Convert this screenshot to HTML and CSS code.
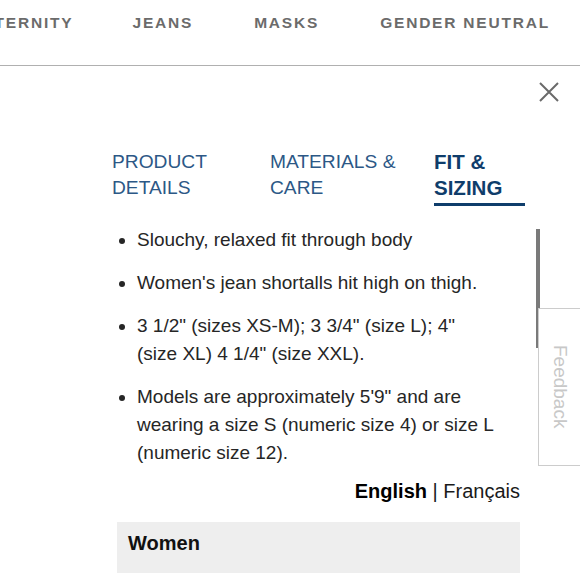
FILE: index.html
```
<!DOCTYPE html>
<html lang="en">
<head>
<meta charset="utf-8">
<title>Fit &amp; Sizing</title>
<link rel="stylesheet" href="styles.css">
</head>
<body>
<nav class="topnav">
  <a class="nav-item first">Maternity</a>
  <a class="nav-item">Jeans</a>
  <a class="nav-item">Masks</a>
  <a class="nav-item">Gender Neutral</a>
</nav>
<div class="modal">
  <div class="close-row">
    <button class="close" aria-label="Close">
      <svg width="20" height="20" viewBox="0 0 20 20"><path d="M1 1 L19 19 M19 1 L1 19" stroke="#6a6a6a" stroke-width="2" fill="none"/></svg>
    </button>
  </div>
  <div class="panel">
    <div class="tabs">
      <div class="tab tab-1">PRODUCT<br>DETAILS</div>
      <div class="tab tab-2">MATERIALS &amp;<br>CARE</div>
      <div class="tab tab-3 active">FIT &amp;<br>SIZING</div>
    </div>
    <ul class="bullets">
      <li>Slouchy, relaxed fit through body</li>
      <li>Women's jean shortalls hit high on thigh.</li>
      <li>3 1/2" (sizes XS-M); 3 3/4" (size L); 4" (size XL) 4 1/4" (size XXL).</li>
      <li>Models are approximately 5'9" and are wearing a size S (numeric size 4) or size L (numeric size 12).</li>
    </ul>
    <div class="lang"><strong>English</strong> | Français</div>
    <div class="size-head">Women</div>
  </div>
</div>
<div class="scroll-thumb"></div>
<div class="feedback"><span>Feedback</span></div>
</body>
</html>
```
FILE: styles.css
```
html, body {
  margin: 0;
  padding: 0;
  background: #fff;
  overflow: hidden;
  font-family: "Liberation Sans", Arial, sans-serif;
}
.topnav {
  display: flex;
  gap: 61px;
  height: 66px;
  box-sizing: border-box;
  padding-top: 14px;
  border-bottom: 1px solid #b0b0b0;
  overflow: hidden;
  white-space: nowrap;
}
.nav-item {
  font-size: 15.5px;
  line-height: 18px;
  font-weight: bold;
  letter-spacing: 1.8px;
  text-transform: uppercase;
  color: #6b6b6b;
}
.nav-item.first {
  margin-left: -32px;
  margin-right: -2px;
}
.close-row {
  display: flex;
  justify-content: flex-end;
  padding: 16px 21px 0 0;
}
.close {
  width: 20px;
  height: 20px;
  padding: 0;
  border: 0;
  background: none;
  display: block;
}
.close svg {
  display: block;
}
.panel {
  padding: 0 60px 0 112px;
}
.tabs {
  display: flex;
  margin-top: 47px;
  margin-right: -5px;
}
.tab {
  font-size: 19.2px;
  line-height: 26px;
  color: #2c5886;
  padding-bottom: 2px;
  border-bottom: 3px solid transparent;
}
.tab-1 { width: 158px; }
.tab-2 { width: 164px; }
.tab-3 { width: 91px; }
.tab.active {
  font-size: 20.5px;
  font-weight: bold;
  color: #0f3d6b;
  border-bottom-color: #0f3d6b;
}
.bullets {
  margin: 20px 0 0 0;
  padding: 0 0 0 25px;
  width: 360px;
  font-size: 19px;
  line-height: 28px;
  color: #262626;
}
.bullets li {
  margin-bottom: 15px;
}
.bullets li:last-child {
  margin-bottom: 0;
}
.lang {
  margin-top: 12px;
  text-align: right;
  font-size: 20px;
  line-height: 24px;
  color: #1a1a1a;
}
.lang strong {
  color: #000;
}
.size-head {
  margin: 19px 0 0 5px;
  padding: 9px 11px 18px;
  background: #eeeeee;
  font-size: 20px;
  line-height: 24px;
  font-weight: bold;
  color: #111;
}
.scroll-thumb {
  position: absolute;
  left: 536px;
  top: 229px;
  width: 4px;
  height: 119px;
  background: #7a7a7a;
}
.feedback {
  position: absolute;
  left: 538px;
  top: 308px;
  right: 0;
  height: 158px;
  box-sizing: border-box;
  border: 1px solid #cccccc;
  border-right: none;
  background: #fff;
  display: flex;
  align-items: center;
  justify-content: center;
}
.feedback span {
  writing-mode: vertical-rl;
  font-size: 19px;
  color: #c8c8c8;
}
```
